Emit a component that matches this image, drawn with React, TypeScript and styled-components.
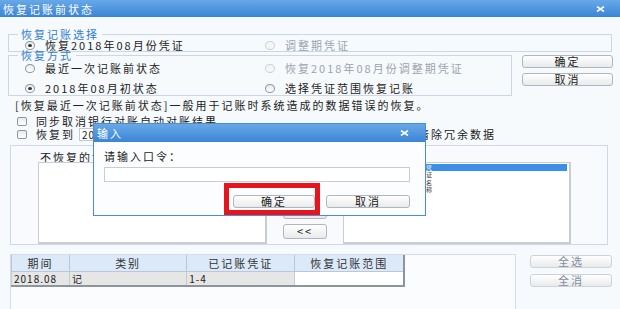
import React from "react";
import styled, { createGlobalStyle } from "styled-components";

const Global = createGlobalStyle`
  html, body { margin: 0; padding: 0; }
  body {
    width: 620px; height: 309px; overflow: hidden; background: #f7fafd;
    font-family: "Noto Sans CJK SC", "Noto Sans", sans-serif;
    font-size: 11px; color: #222;
  }
  * { box-sizing: border-box; }
`;

const Page = styled.div`
  position: relative;
  width: 620px;
  height: 309px;
  overflow: hidden;
  background: #f7fafd;
  font-size: 11px;
  letter-spacing: 2px;
  display: flex;
  flex-direction: column;
`;

const TitleBar = styled.div<{ $h: number }>`
  flex: none;
  height: ${(p) => p.$h}px;
  background: linear-gradient(#68a8e8, #3a85d5);
  color: #fff;
  display: flex;
  align-items: center;
  justify-content: space-between;
  padding: 0 ${(p) => (p.$h > 17 ? 16 : 15)}px 0 3px;
  font-size: 11px;
  line-height: 12px;
`;

const CloseIcon = () => (
  <svg width="9" height="6" viewBox="0 0 9 6">
    <path d="M1 0.6 L8 5.4 M8 0.6 L1 5.4" stroke="#fff" strokeWidth="1.7" />
  </svg>
);

const Content = styled.div`
  flex: 1;
  display: flex;
  flex-direction: column;
  padding: 0 8px;
`;

const Group = styled.fieldset<{ $w?: number; $mt?: number }>`
  margin: ${(p) => p.$mt ?? 0}px 0 0 0;
  padding: 0 0 ${(p) => (p.$w ? 1 : 0)}px 0;
  min-width: 0;
  border: 1px solid #cbd7e5;
  width: ${(p) => (p.$w ? `${p.$w}px` : "auto")};
  flex: none;
`;

const Legend = styled.legend`
  margin-left: 9px;
  padding: 0 3px;
  color: #2f7cd6;
  font-size: 11px;
  line-height: 10px;
`;

const RadioGrid = styled.div<{ $gap: number; $pt: number }>`
  display: grid;
  grid-template-columns: 240px 1fr;
  row-gap: ${(p) => p.$gap}px;
  padding: ${(p) => p.$pt}px 0 0 16px;
`;

const Choice = styled.label<{ $disabled?: boolean }>`
  display: flex;
  align-items: center;
  gap: 10px;
  height: 12px;
  line-height: 12px;
  white-space: nowrap;
  color: ${(p) => (p.$disabled ? "#9ba3ad" : "#222")};
`;

const RadioDot = styled.span<{ $checked?: boolean; $disabled?: boolean }>`
  flex: none;
  width: 10px;
  height: 9px;
  border-radius: 50%;
  border: 1px solid ${(p) => (p.$disabled ? "#cdd2d8" : "#8d959e")};
  background: ${(p) => (p.$disabled ? "#f4f5f7" : "linear-gradient(#e6e9ec, #ffffff)")};
  display: flex;
  align-items: center;
  justify-content: center;
  &::after {
    content: "";
    display: ${(p) => (p.$checked ? "block" : "none")};
    width: 4px;
    height: 3px;
    border-radius: 50%;
    background: #333;
  }
`;

const Radio = ({ label, checked, disabled }: { label: string; checked?: boolean; disabled?: boolean }) => (
  <Choice $disabled={disabled}>
    <RadioDot $checked={checked} $disabled={disabled} />
    {label}
  </Choice>
);

const ModeRow = styled.div`
  display: flex;
  align-items: flex-start;
  margin-top: -2px;
  gap: 10px;
`;

const SideButtons = styled.div<{ $pt: number; $gap: number }>`
  display: flex;
  flex-direction: column;
  gap: ${(p) => p.$gap}px;
  padding-top: ${(p) => p.$pt}px;
`;

const Btn = styled.button<{ $w: number; $h?: number; $muted?: boolean }>`
  width: ${(p) => p.$w}px;
  height: ${(p) => p.$h ?? 13}px;
  padding: 0;
  border: 1px solid ${(p) => (p.$muted ? "#ccd3db" : "#aeb6c0")};
  border-radius: 3px;
  background: linear-gradient(#ffffff, #e9eaec);
  font-family: inherit;
  font-size: 11px;
  line-height: 11px;
  letter-spacing: 2px;
  color: ${(p) => (p.$muted ? "#7f8ea1" : "#222")};
  display: flex;
  align-items: center;
  justify-content: center;
  overflow: visible;
`;

const Desc = styled.div`
  margin: 3px 0 0 7px;
  line-height: 12px;
  white-space: nowrap;
`;

const CheckRow = styled.div<{ $mt: number }>`
  display: flex;
  align-items: center;
  height: 12px;
  margin-top: ${(p) => p.$mt}px;
  padding-left: 9px;
  white-space: nowrap;
`;

const CheckItem = styled.label<{ $ml?: number }>`
  display: flex;
  align-items: center;
  gap: 9px;
  line-height: 12px;
  margin-left: ${(p) => p.$ml ?? 0}px;
`;

const Box = styled.span`
  flex: none;
  width: 10px;
  height: 9px;
  border: 1px solid #8d959e;
  border-radius: 2px;
  background: linear-gradient(#e6e9ec, #ffffff);
`;

const DateInput = styled.div`
  margin-left: 4px;
  width: 170px;
  height: 13px;
  border: 1px solid #c3cad2;
  background: #fff;
  font-size: 10px;
  line-height: 11px;
  letter-spacing: 1px;
  padding-left: 2px;
`;

const Panel = styled.div`
  margin: 5px 4px 0 2px;
  height: 100px;
  flex: none;
  border: 1px solid #cdd9e7;
  background: #f8fafd;
  display: grid;
  grid-template-columns: 229px 76px 228px;
  grid-template-rows: 10px 1fr;
  padding: 6px 36px 0 27px;
`;

const ListLabel = styled.div`
  line-height: 10px;
  padding-left: 2px;
  white-space: nowrap;
`;

const List = styled.div`
  grid-row: 2;
  background: #fff;
  border: 1px solid #c9ced5;
  border-right-width: 2px;
  border-bottom-width: 2px;
`;

const RightList = styled(List)`
  display: grid;
  grid-template-columns: 81px 8px 1fr;
  grid-template-rows: 7px auto;
  padding: 1px 2px 0 1px;
  align-content: start;
`;

const SelectedBar = styled.div`
  grid-row: 1;
  grid-column: 1 / -1;
  background: #3b8fe8;
`;

const VerticalText = styled.div`
  grid-row: 1 / 3;
  grid-column: 2;
  z-index: 1;
  display: flex;
  flex-direction: column;
  font-size: 6px;
  line-height: 7.3px;
  letter-spacing: 0;
  color: #333;
  width: 7px;
  & > span:first-child { color: #fff; }
`;

const Mover = styled.div`
  grid-row: 2;
  display: flex;
  flex-direction: column;
  justify-content: flex-end;
  align-items: center;
  gap: 5px;
  padding-bottom: 5px;
`;

const Bottom = styled.div`
  flex: 1;
  display: flex;
  margin-top: 9px;
`;

const TableWrap = styled.div`
  margin-left: 2px;
  width: 507px;
  border: 1px solid #d3dce8;
  border-bottom: none;
  background: #fbfcfe;
`;

const Table = styled.table`
  border-collapse: collapse;
  table-layout: fixed;
  width: 394px;
  border-right: 2px solid #8e949b;
  border-bottom: 2px solid #8e949b;
`;

const Th = styled.th<{ $w: number }>`
  width: ${(p) => p.$w}px;
  height: 16px;
  padding: 0;
  background: #dbe9f8;
  border: 1px solid #b8c8da;
  border-top: none;
  font-weight: normal;
  font-size: 11px;
  line-height: 12px;
  color: #333;
  text-align: center;
`;

const Td = styled.td<{ $blank?: boolean }>`
  height: 15px;
  padding: 0 0 0 2px;
  background: ${(p) => (p.$blank ? "#fff" : "#e6e6e6")};
  border: 1px solid #c3ccd6;
  font-size: 10px;
  line-height: 11px;
  letter-spacing: 1px;
  color: #222;
  white-space: nowrap;
`;

const SelectButtons = styled(SideButtons)`
  margin-left: 14px;
`;

const Dialog = styled.div`
  position: absolute;
  left: 93px;
  top: 123px;
  width: 333px;
  height: 93px;
  border: 1px solid #4a8cd9;
  background: #fbfdff;
  display: flex;
  flex-direction: column;
  z-index: 2;
`;

const DialogBody = styled.div`
  flex: 1;
  display: flex;
  flex-direction: column;
  padding: 8px 15px 0 10px;
`;

const PromptLabel = styled.div`
  line-height: 12px;
`;

const PromptInput = styled.div`
  margin-top: 5px;
  height: 15px;
  border: 1px solid #c7cdd4;
  background: #fff;
`;

const DialogActions = styled.div`
  display: flex;
  justify-content: flex-end;
  gap: 11px;
  margin-top: 13px;
`;

const Highlight = styled.div`
  position: absolute;
  left: 224px;
  top: 183px;
  width: 96px;
  height: 32px;
  border: 5px solid #e8141c;
  z-index: 3;
`;

export default function App() {
  return (
    <>
      <Global />
      <Page>
        <TitleBar $h={17}>
          <span>恢复记账前状态</span>
          <CloseIcon />
        </TitleBar>
        <Content>
          <Group $mt={12}>
            <Legend>恢复记账选择</Legend>
            <RadioGrid $gap={0} $pt={0}>
              <Radio label="恢复2018年08月份凭证" checked />
              <Radio label="调整期凭证" disabled />
            </RadioGrid>
          </Group>
          <ModeRow>
            <Group $w={504}>
              <Legend>恢复方式</Legend>
              <RadioGrid $gap={8} $pt={2}>
                <Radio label="最近一次记账前状态" />
                <Radio label="恢复2018年08月份调整期凭证" disabled />
                <Radio label="2018年08月初状态" checked />
                <Radio label="选择凭证范围恢复记账" />
              </RadioGrid>
            </Group>
            <SideButtons $pt={5} $gap={5}>
              <Btn $w={91}>确定</Btn>
              <Btn $w={91}>取消</Btn>
            </SideButtons>
          </ModeRow>
          <Desc>[恢复最近一次记账前状态]一般用于记账时系统造成的数据错误的恢复。</Desc>
          <CheckRow $mt={4}>
            <CheckItem>
              <Box />
              同步取消银行对账自动对账结果
            </CheckItem>
          </CheckRow>
          <CheckRow $mt={1}>
            <CheckItem>
              <Box />
              恢复到
            </CheckItem>
            <DateInput>2018-08-01</DateInput>
            <CheckItem $ml={150}>
              <Box />
              清除冗余数据
            </CheckItem>
          </CheckRow>
          <Panel>
            <ListLabel>不恢复的凭证</ListLabel>
            <div />
            <div />
            <List />
            <Mover>
              <Btn $w={44} $h={15}>&gt;</Btn>
              <Btn $w={44} $h={15}>&gt;&gt;</Btn>
              <Btn $w={44} $h={15}>&lt;</Btn>
              <Btn $w={44} $h={15}>&lt;&lt;</Btn>
            </Mover>
            <RightList>
              <SelectedBar />
              <VerticalText>
                <span>凭</span>
                <span>证</span>
                <span>名</span>
                <span>称</span>
              </VerticalText>
            </RightList>
          </Panel>
          <Bottom>
            <TableWrap>
              <Table>
                <thead>
                  <tr>
                    <Th $w={58}>期间</Th>
                    <Th $w={117}>类别</Th>
                    <Th $w={108}>已记账凭证</Th>
                    <Th $w={109}>恢复记账范围</Th>
                  </tr>
                </thead>
                <tbody>
                  <tr>
                    <Td>2018.08</Td>
                    <Td>记</Td>
                    <Td>1-4</Td>
                    <Td $blank />
                  </tr>
                </tbody>
              </Table>
            </TableWrap>
            <SelectButtons $pt={1} $gap={6}>
              <Btn $w={82} $muted>全选</Btn>
              <Btn $w={82} $muted>全消</Btn>
            </SelectButtons>
          </Bottom>
        </Content>
        <Dialog>
          <TitleBar $h={18}>
            <span>输入</span>
            <CloseIcon />
          </TitleBar>
          <DialogBody>
            <PromptLabel>请输入口令：</PromptLabel>
            <PromptInput />
            <DialogActions>
              <Btn $w={82}>确定</Btn>
              <Btn $w={84}>取消</Btn>
            </DialogActions>
          </DialogBody>
        </Dialog>
        <Highlight />
      </Page>
    </>
  );
}
